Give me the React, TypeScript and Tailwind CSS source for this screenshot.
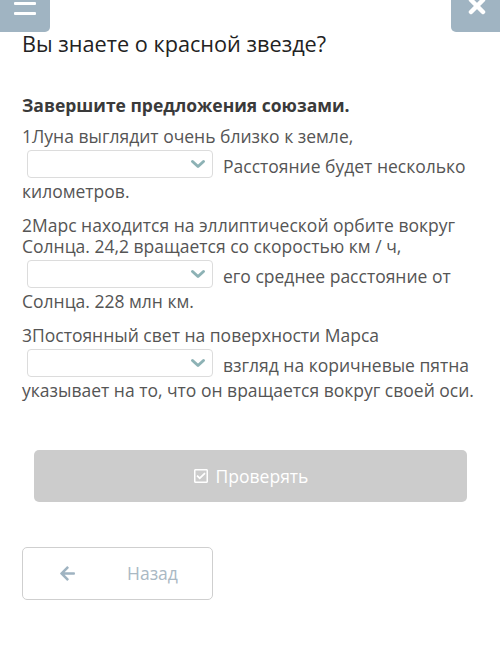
import { FaRegCheckSquare, FaArrowLeft } from "react-icons/fa";

function Blank() {
    return (
        <span className="relative inline-block align-[-8px] my-[3px] ml-[5px] mr-[10px] w-[186px] h-[28px] border border-[#dcdcdc] rounded-[4px] bg-white">
            <svg width="16" height="12" viewBox="0 0 16 12" className="absolute right-[6px] top-[7px]">
                <path d="M2.5 3.5 L8 8.5 L13.5 3.5" fill="none" stroke="#8db2b5" strokeWidth="3" strokeLinecap="round" strokeLinejoin="round" />
            </svg>
        </span>
    );
}

export default function App() {
    return (
        <div className="w-[500px] h-[663px] bg-white overflow-hidden" style={{ fontFamily: '"Open Sans", "Noto Sans", sans-serif' }}>
            <div className="flex justify-between h-[32px]">
                <button className="w-[50px] h-[32px] bg-[#a0b4c2] rounded-br-[5px] flex items-start justify-center">
                    <svg width="22" height="18" viewBox="0 0 22 18" className="mt-[2px]">
                        <rect x="0" y="0" width="22" height="3" rx="1" fill="#fff" />
                        <rect x="0" y="10" width="22" height="3" rx="1" fill="#fff" />
                    </svg>
                </button>
                <button className="w-[49px] h-[32px] bg-[#a0b4c2] rounded-bl-[5px] flex items-start justify-center">
                    <svg width="18" height="16" viewBox="0 0 18 16" className="ml-[2px]">
                        <path d="M3 0 L15 12 M15 0 L3 12" stroke="#fff" strokeWidth="4.5" strokeLinecap="round" />
                    </svg>
                </button>
            </div>

            <div className="px-[22px]">
                <h1 className="text-[21.7px] leading-[26px] text-[#222] -mt-px">Вы знаете о красной звезде?</h1>

                <div className="mt-[38px] text-[17.5px] leading-[21px] text-[#555]">
                    <p className="font-bold text-[#3a3a3a] mb-[10px]">Завершите предложения союзами.</p>
                    <p className="mb-[13px]">
                        1Луна выглядит очень близко к земле,
                        <br />
                        <Blank />Расстояние будет несколько
                        <br />
                        километров.
                    </p>
                    <p className="mb-[13px]">
                        2Марс находится на эллиптической орбите вокруг
                        <br />
                        Солнца. 24,2 вращается со скоростью км / ч,
                        <br />
                        <Blank />его среднее расстояние от
                        <br />
                        Солнца. 228 млн км.
                    </p>
                    <p>
                        3Постоянный свет на поверхности Марса
                        <br />
                        <Blank />взгляд на коричневые пятна
                        <br />
                        указывает на то, что он вращается вокруг своей оси.
                    </p>
                </div>

                <div className="pl-[12px] pr-[11px] mt-[49px]">
                    <button className="w-full h-[52px] bg-[#cccccc] rounded-[5px] flex items-center justify-center gap-[7px] text-white text-[17.5px]">
                        <FaRegCheckSquare className="w-[16px] h-[16px]" />
                        Проверять
                    </button>
                </div>

                <button className="mt-[45px] w-[191px] h-[53px] border border-[#cfcfcf] rounded-[5px] bg-white flex items-center pl-[36px] text-[17.5px] text-[#aab9c4]">
                    <FaArrowLeft className="w-[17px] h-[17px] text-[#9fb3c1]" />
                    <span className="ml-[51px]">Назад</span>
                </button>
            </div>
        </div>
    );
}
